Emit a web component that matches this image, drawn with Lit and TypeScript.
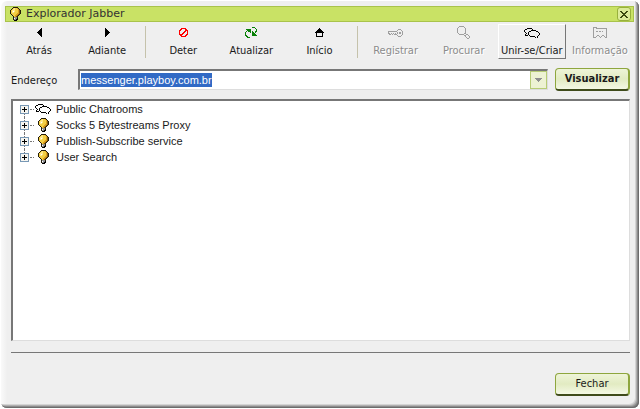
import { LitElement, html, css, svg } from "lit";
import { customElement, property } from "lit/decorators.js";

/* Pixel icons: each character of a row is one pixel, looked up in the palette. */
const PALETTE: Record<string, string> = {
  k: "#000000", r: "#ff0000", g: "#078007", a: "#9f9f9f", x: "#3c4a10",
  w: "#ffffff", y: "#f3cf45", o: "#dc9f1c", d: "#80580f", b: "#241c0a", h: "#ffe88a", s: "#8f8f8f",
};

const ICONS: Record<string, string[]> = {
  back: ["....k", "...kk", "..kkk", ".kkkk", "kkkkk", ".kkkk", "..kkk", "...kk", "....k"],
  forward: ["k....", "kk...", "kkk..", "kkkk.", "kkkkk", "kkkk.", "kkk..", "kk...", "k...."],
  stop: ["..rrrrr..", ".rr...rr.", "rr....rrr", "r....rr.r", "r...rr..r", "r..rr...r", "rrrr...rr", ".rr...rr.", "..rrrrr.."],
  refresh: [
    ".......ggg..", "..........g.", ".ggggg.....g", "..gggg.....g", ".g.ggg.g..gg", "g....g.gg.g.",
    "g......ggg..", "g......gggg.", "gg.....ggggg", ".gg.........", "..ggg.......",
  ],
  home: ["....k....", "...kkk...", "..kkkkk..", ".kkkkkkk.", "kkkkkkkkk", ".k.....k.", ".k.....k.", ".k.....k.", ".kkkkkkk."],
  key: [
    "..........aaa..", ".........a...a.", "aaaaaaaaa.....a", "a........a.aa.a", "aa.a.a.a.a.aa.a",
    ".aa.a.aaa.....a", ".........a...a.", "..........aaa..",
  ],
  search: [
    "..aaaaa......", ".a.....a.....", "a.......a....", "a.......a....", "a.......a....", "a.......a....",
    "a.......a....", ".a.....aa....", "..aaaaa..aa..", ".......aa..a.", "........a...a", ".........a..a", "..........aa.",
  ],
  chat: [
    "...kkkkk........", ".kk.....k.......", "k......kkkkk....", "k....kk.....kk..", ".k..k.........k.",
    "..k.k..........k", ".k..k..........k", ".kkk.k........k.", "......kkkkk..k..", "...........k.k..",
  ],
  info: [
    "aaaa..........", "a..aaaaaaaaaaa", "a............a", "a............a", "a..aa.aa.a...a", "a............a",
    "a............a", "a............a", "a...aa...aa..a", "a..a..a.a..a.a", "aaa....a....aa",
  ],
  bulb: [
    "...bbbbb...", "..byhyyob..", ".byhhyyyob.", "byhhhyyyodb", "byhwhyyyodb", "byhhyyyyodb", "byyyyyyoodb",
    ".byyyyoodb.", "..byyoodb..", "...byodb...", "...bsssb...", "...bwssk...", "...bsskk...", "....kkk....",
  ],
  cross: ["xx....xx", ".xx..xx.", "..xxxx..", "...xx...", "..xxxx..", ".xx..xx.", "xx....xx"],
  drop: ["sssssss", ".sssss.", "..sss..", "...s..."],
  plus: ["..k..", "..k..", "kkkkk", "..k..", "..k.."],
};

@customElement("pixel-icon")
export class PixelIcon extends LitElement {
  @property() name = "";
  static styles = css`
    :host { display: inline-flex; flex: none; }
    svg { display: block; shape-rendering: crispEdges; }
  `;
  render() {
    const rows = ICONS[this.name] ?? [];
    const w = Math.max(0, ...rows.map((r) => r.length));
    return html`<svg width=${w} height=${rows.length} viewBox="0 0 ${w} ${rows.length}" aria-hidden="true">
      ${rows.flatMap((row, y) => [...row].map((c, x) =>
        c === "." ? null : svg`<rect x=${x} y=${y} width="1" height="1" fill=${PALETTE[c]}></rect>`))}
    </svg>`;
  }
}

interface Tool { label: string; icon: string; disabled?: boolean; raised?: boolean; }

const GROUPS: Tool[][] = [
  [{ label: "Atrás", icon: "back" }, { label: "Adiante", icon: "forward" }],
  [{ label: "Deter", icon: "stop" }, { label: "Atualizar", icon: "refresh" }, { label: "Início", icon: "home" }],
  [
    { label: "Registrar", icon: "key", disabled: true },
    { label: "Procurar", icon: "search", disabled: true },
    { label: "Unir-se/Criar", icon: "chat", raised: true },
    { label: "Informação", icon: "info", disabled: true },
  ],
];

const SERVICES = [
  { label: "Public Chatrooms", icon: "chat" },
  { label: "Socks 5 Bytestreams Proxy", icon: "bulb" },
  { label: "Publish-Subscribe service", icon: "bulb" },
  { label: "User Search", icon: "bulb" },
];

@customElement("app-root")
export class AppRoot extends LitElement {
  static styles = css`
    :host {
      display: block; box-sizing: border-box; height: 100vh; padding: 1px; background: #fff;
      font: 11px/14px "DejaVu Sans Condensed", "DejaVu Sans", sans-serif; color: #1a1a1a;
    }
    * { box-sizing: border-box; }
    button, input { font: inherit; color: inherit; margin: 0; padding: 0; }
    .window {
      display: flex; flex-direction: column; height: 100%; padding: 5px 5px 5px 4px;
      border-radius: 6px; background: linear-gradient(90deg, #fafafa, #efefef 6px);
      box-shadow: inset -1px -1px #6c6c6c, inset -2px -2px #8c8c8c, inset -3px -3px #b0b0b0, inset -4px -4px #d4d4d4;
    }
    .title {
      display: flex; align-items: center; height: 16px; padding: 0 2px 0 4px;
      background: #c9e265; border: 1px solid #a9c34b;
      font-family: "DejaVu Sans", sans-serif; color: #333;
    }
    h1 { flex: 1; margin: 0 0 0 5px; font: inherit; }
    .close {
      display: grid; place-items: center; width: 14px; height: 14px;
      border: 1px solid #98b13c; border-radius: 3px; background: #dcec9a;
    }
    .toolbar { display: flex; padding: 2px 0 0; }
    .tool {
      display: grid; grid-template-rows: 15px 18px; place-items: center; flex: 1 1 0; min-width: 0; height: 35px;
      border: 1px solid transparent; background: none; white-space: nowrap;
    }
    .tool:disabled { color: #8b8b8b; text-shadow: 1px 1px #fff; }
    .tool.raised { border-color: #fff #777 #777 #fff; }
    .tool span { align-self: end; }
    .sep { flex: 0 0 8px; display: grid; justify-content: center; padding: 2px 0 1px; }
    .sep::before { content: ""; width: 1px; background: #c5c2ab; }
    .address { display: flex; align-items: center; gap: 7px; padding: 9px 4px 0 6px; }
    .address label { width: 60px; padding-top: 2px; }
    .combo {
      display: flex; flex: 1; height: 21px; background: #fff;
      border: solid; border-width: 2px 1px 1px 2px; border-color: #777 #ddd #ddd #777;
    }
    .combo input {
      flex: 1; min-width: 0; border: 0; outline: 0; background: none; padding: 0 1px;
      font-family: "Liberation Sans", Arial, sans-serif;
    }
    .combo input::selection { background: #316ac5; color: #fff; }
    .drop {
      display: grid; place-items: center; width: 17px; height: 18px; border: 1px solid #b7cc75; background: #edf2d3;
    }
    .push {
      width: 75px; height: 23px; border: 1px solid #8ea63e; border-width: 1px 2px 2px 1px;
      border-bottom-color: #3f4b1b; border-radius: 4px;
      background: linear-gradient(#eef4d8, #e2ebc2 50%, #f4f8e4);
    }
    .go { font-weight: bold; }
    .tree {
      flex: 1; min-height: 0; margin: 8px 4px 0 6px; padding: 0 7px; list-style: none; background: #fff;
      border: solid; border-width: 2px 1px 1px 2px; border-color: #777 #ddd #ddd #777;
      font-family: "Liberation Sans", Arial, sans-serif;
    }
    .tree li { display: grid; grid-template-columns: 9px 4px 16px 1fr; align-items: center; height: 16px; column-gap: 1px; }
    .branch { display: flex; flex-direction: column; align-items: center; height: 16px; }
    .branch::before, .branch::after { content: ""; flex: 1; border-left: 1px dotted #777; }
    li:first-child .branch::before, li:last-child .branch::after { border-color: transparent; }
    .expander { display: grid; place-items: center; width: 9px; height: 9px; border: 1px solid #7898b5; background: #f6f5f0; }
    .dots { border-top: 1px dotted #777; }
    .name { padding-left: 4px; }
    .tree pixel-icon { justify-self: center; }
    footer { display: flex; justify-content: flex-end; margin: 11px 4px 0 6px; padding: 20px 0 7px; border-top: 1px solid #777; }
  `;

  firstUpdated() {
    const field = this.renderRoot.querySelector("input");
    field?.focus();
    field?.select();
  }

  render() {
    return html`<main class="window">
      <header class="title">
        <pixel-icon name="bulb"></pixel-icon>
        <h1>Explorador Jabber</h1>
        <button class="close" aria-label="Fechar janela"><pixel-icon name="cross"></pixel-icon></button>
      </header>
      <nav class="toolbar">
        ${GROUPS.map((group, i) => html`
          ${i ? html`<span class="sep"></span>` : null}
          ${group.map((t) => html`<button class="tool ${t.raised ? "raised" : ""}" ?disabled=${t.disabled}>
            <pixel-icon name=${t.icon}></pixel-icon><span>${t.label}</span>
          </button>`)}`)}
      </nav>
      <form class="address" @submit=${(e: Event) => e.preventDefault()}>
        <label for="address">Endereço</label>
        <div class="combo">
          <input id="address" type="text" value="messenger.playboy.com.br" spellcheck="false">
          <button type="button" class="drop" aria-label="Lista de endereços"><pixel-icon name="drop"></pixel-icon></button>
        </div>
        <button class="push go">Visualizar</button>
      </form>
      <ul class="tree">
        ${SERVICES.map((s) => html`<li>
          <span class="branch"><button class="expander" aria-label="Expandir"><pixel-icon name="plus"></pixel-icon></button></span>
          <span class="dots"></span>
          <pixel-icon name=${s.icon}></pixel-icon>
          <span class="name">${s.label}</span>
        </li>`)}
      </ul>
      <footer><button class="push">Fechar</button></footer>
    </main>`;
  }
}
